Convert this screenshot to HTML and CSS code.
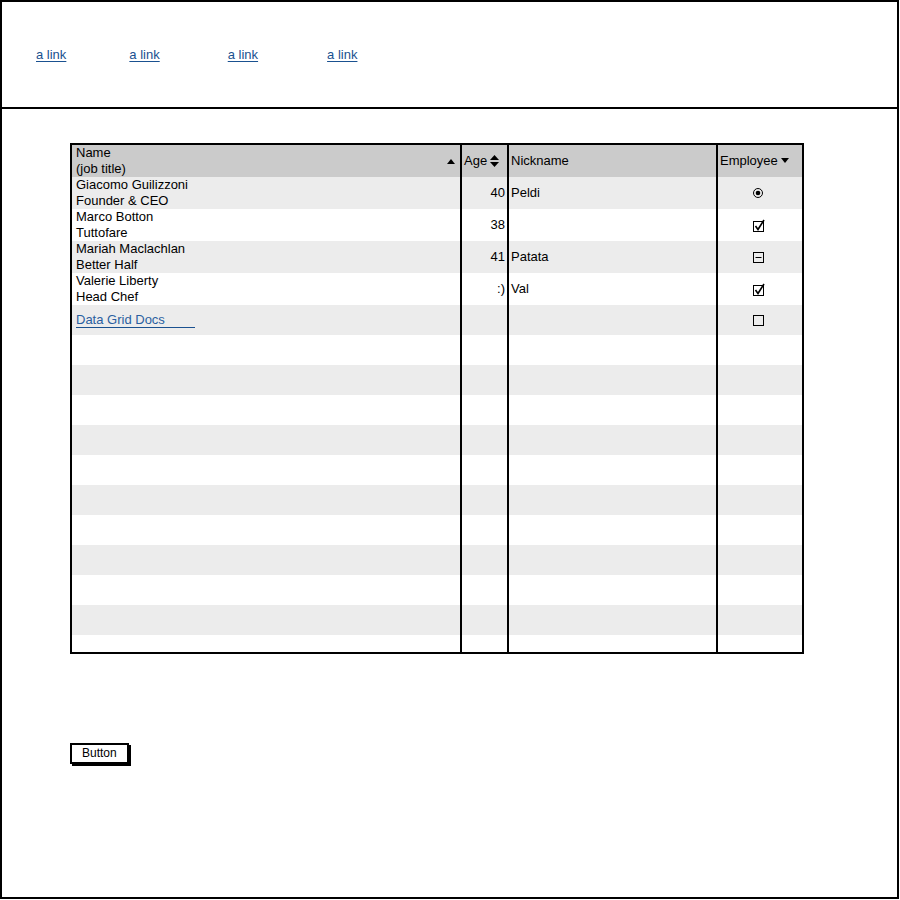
FILE: index.html
```
<!DOCTYPE html>
<html>
<head>
<meta charset="utf-8">
<link rel="stylesheet" href="styles.css">
</head>
<body>
<div class="frame">
  <div class="header">
    <a class="nl" href="#">a link</a>
    <a class="nl" href="#">a link</a>
    <a class="nl" href="#">a link</a>
    <a class="nl" href="#">a link</a>
  </div>
  <div class="main">
    <div class="grid">
      <div class="row head">
        <div class="c name hname"><span>Name<br>(job title)</span>
          <svg class="tri" width="8" height="5" viewBox="0 0 8 5"><polygon points="0,5 4,0 8,5"/></svg></div>
        <div class="c age hage"><span>Age</span>
          <svg width="9" height="12" viewBox="0 0 9 12"><polygon points="0,5 4.5,0 9,5"/><polygon points="0,7 9,7 4.5,12"/></svg></div>
        <div class="c nick">Nickname</div>
        <div class="c emp hemp"><span>Employee</span>
          <svg width="8" height="5" viewBox="0 0 8 5"><polygon points="0,0 8,0 4,5"/></svg></div>
      </div>
      <div class="row g">
        <div class="c name">Giacomo Guilizzoni<br>Founder &amp; CEO</div>
        <div class="c age">40</div>
        <div class="c nick">Peldi</div>
        <div class="c emp"><svg width="12" height="12" viewBox="0 0 12 12"><circle cx="6" cy="6" r="4.5" fill="none" stroke="#000" stroke-width="1"/><circle cx="6" cy="6" r="2.3"/></svg></div>
      </div>
      <div class="row">
        <div class="c name">Marco Botton<br>Tuttofare</div>
        <div class="c age">38</div>
        <div class="c nick"></div>
        <div class="c emp"><svg width="13" height="13" viewBox="0 0 13 13"><rect x="1.5" y="2.5" width="10" height="10" fill="none" stroke="#000" stroke-width="1"/><path d="M3.5 7 L6 10.5 L12 1" fill="none" stroke="#000" stroke-width="1.6"/></svg></div>
      </div>
      <div class="row g">
        <div class="c name">Mariah Maclachlan<br>Better Half</div>
        <div class="c age">41</div>
        <div class="c nick">Patata</div>
        <div class="c emp"><svg width="13" height="13" viewBox="0 0 13 13"><rect x="1.5" y="1.5" width="10" height="10" fill="none" stroke="#000" stroke-width="1"/><path d="M3.5 6.5 H9.5" fill="none" stroke="#000" stroke-width="1"/></svg></div>
      </div>
      <div class="row">
        <div class="c name">Valerie Liberty<br>Head Chef</div>
        <div class="c age">:)</div>
        <div class="c nick">Val</div>
        <div class="c emp"><svg width="13" height="13" viewBox="0 0 13 13"><rect x="1.5" y="2.5" width="10" height="10" fill="none" stroke="#000" stroke-width="1"/><path d="M3.5 7 L6 10.5 L12 1" fill="none" stroke="#000" stroke-width="1.6"/></svg></div>
      </div>
      <div class="row short g">
        <div class="c name"><a class="docs" href="#">Data Grid Docs</a></div>
        <div class="c age"></div>
        <div class="c nick"></div>
        <div class="c emp"><svg width="13" height="13" viewBox="0 0 13 13"><rect x="1.5" y="1.5" width="10" height="10" fill="none" stroke="#000" stroke-width="1"/></svg></div>
      </div>
      <div class="row short"><div class="c name"></div><div class="c age"></div><div class="c nick"></div><div class="c emp"></div></div>
      <div class="row short g"><div class="c name"></div><div class="c age"></div><div class="c nick"></div><div class="c emp"></div></div>
      <div class="row short"><div class="c name"></div><div class="c age"></div><div class="c nick"></div><div class="c emp"></div></div>
      <div class="row short g"><div class="c name"></div><div class="c age"></div><div class="c nick"></div><div class="c emp"></div></div>
      <div class="row short"><div class="c name"></div><div class="c age"></div><div class="c nick"></div><div class="c emp"></div></div>
      <div class="row short g"><div class="c name"></div><div class="c age"></div><div class="c nick"></div><div class="c emp"></div></div>
      <div class="row short"><div class="c name"></div><div class="c age"></div><div class="c nick"></div><div class="c emp"></div></div>
      <div class="row short g"><div class="c name"></div><div class="c age"></div><div class="c nick"></div><div class="c emp"></div></div>
      <div class="row short"><div class="c name"></div><div class="c age"></div><div class="c nick"></div><div class="c emp"></div></div>
      <div class="row short g"><div class="c name"></div><div class="c age"></div><div class="c nick"></div><div class="c emp"></div></div>
      <div class="row short"><div class="c name"></div><div class="c age"></div><div class="c nick"></div><div class="c emp"></div></div>
    </div>
    <button class="btn">Button</button>
  </div>
</div>
</body>
</html>
```
FILE: styles.css
```
html, body {
  margin: 0;
  padding: 0;
  background: #fff;
}
body {
  font-family: "Liberation Sans", Arial, sans-serif;
  font-size: 13px;
  color: #000;
}
.frame {
  width: 899px;
  height: 899px;
  box-sizing: border-box;
  border: 2px solid #000;
}
.header {
  height: 105px;
  border-bottom: 2px solid #000;
  display: flex;
  align-items: center;
  padding-left: 34px;
}
.nl {
  color: #1a5190;
  text-decoration: underline;
  text-underline-offset: 2px;
  line-height: 16px;
}
.nl:nth-child(2) { margin-left: 63px; }
.nl:nth-child(3) { margin-left: 68px; }
.nl:nth-child(4) { margin-left: 69px; }
.main {
  padding: 34px 0 0 68px;
}
.grid {
  width: 734px;
  height: 511px;
  box-sizing: border-box;
  border: 2px solid #000;
  overflow: hidden;
}
.row {
  display: grid;
  grid-template-columns: 390px 47px 209px 1fr;
  height: 32px;
  line-height: 16px;
}
.row.short { height: 30px; }
.row.g { background: #ececec; }
.row.head { background: #cbcbcb; }
.c {
  box-sizing: border-box;
  border-right: 2px solid #000;
  display: flex;
  align-items: center;
  overflow: hidden;
  white-space: nowrap;
}
.c.emp { border-right: none; justify-content: center; padding-right: 4px; }
.c.name { padding-left: 4px; }
.c.age { justify-content: flex-end; padding-right: 2px; }
.c.nick { padding-left: 2px; }
.hname { justify-content: space-between; padding-right: 5px; }
.hname .tri { margin-top: 1px; }
.c.hage { justify-content: flex-start; padding-left: 2px; gap: 3px; }
.c.hemp { justify-content: flex-start; padding-left: 2px; gap: 3px; }
.hemp svg { margin-top: -2px; }
.docs {
  color: #2a5fa0;
  text-decoration: none;
  border-bottom: 1px solid #1a5190;
  padding-right: 30px;
  line-height: 14px;
}
.btn {
  display: block;
  margin-top: 89px;
  font-family: "Liberation Sans", Arial, sans-serif;
  font-size: 12px;
  line-height: 15px;
  padding: 1px 10px;
  background: #fff;
  color: #000;
  border: 2px solid #000;
  border-radius: 0;
  box-shadow: 2px 2px 0 #000;
}
```
